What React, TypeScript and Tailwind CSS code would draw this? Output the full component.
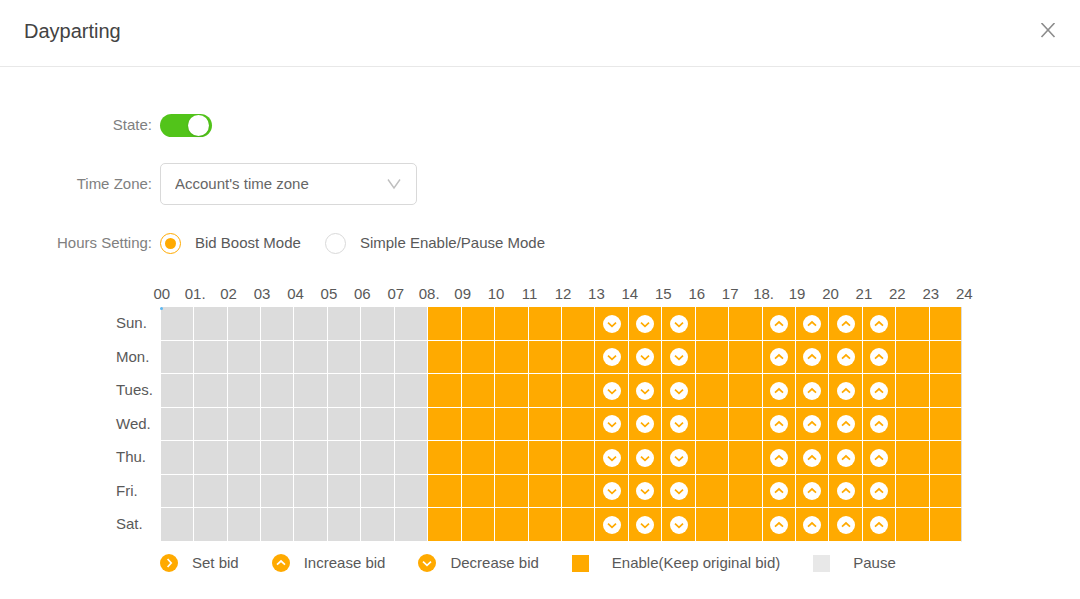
import { useState } from "react";

const days = ["Sun.", "Mon.", "Tues.", "Wed.", "Thu.", "Fri.", "Sat."];
const hourLabels = [
  "00", "01.", "02", "03", "04", "05", "06", "07", "08.", "09", "10", "11", "12",
  "13", "14", "15", "16", "17", "18.", "19", "20", "21", "22", "23", "24",
];
const hours = Array.from({ length: 24 }, (_, i) => i);

type Direction = "up" | "down" | "right";

const chevrons: Record<Direction, string> = {
  up: "M5 10.6 9 7l4 3.6",
  down: "M5 7.7 9 11.3l4-3.6",
  right: "M7.6 5 11.2 9l-3.6 4",
};

const BidIcon = ({ direction, inverted }: { direction: Direction; inverted?: boolean }) => (
  <svg viewBox="0 0 18 18" className="block size-[18px] shrink-0" aria-hidden="true">
    <circle cx="9" cy="9" r="9" fill={inverted ? "#fff" : "#ffaa00"} />
    <path
      d={chevrons[direction]}
      fill="none"
      stroke={inverted ? "#ffaa00" : "#fff"}
      strokeWidth="1.7"
    />
  </svg>
);

const getDirection = (hour: number): Direction | null => {
  if (hour >= 13 && hour <= 15) return "down";
  if (hour >= 18 && hour <= 21) return "up";
  return null;
};

const Radio = ({ id, label, checked, onChange }: any) => (
  <div className="flex items-center gap-[14px]">
    <input
      type="radio"
      name="mode"
      id={id}
      checked={checked}
      onChange={onChange}
      className="grid size-[21px] appearance-none place-items-center rounded-full border border-[#d9d9d9] bg-white before:size-[11px] before:rounded-full checked:border-[#ffaa00] checked:before:bg-[#ffaa00]"
    />
    <label htmlFor={id} className="text-[#595959]">{label}</label>
  </div>
);

const Schedule = () => {
  // every hour spans two half-width columns, so the hour labels can sit on the grid lines
  return (
    <table className="w-full table-fixed border-separate border-spacing-0 text-[#595959]">
      <colgroup>
        <col className="w-[27px]" />
        <col span={50} />
      </colgroup>
      <thead>
        <tr className="h-[26px]">
          <td className="p-0" />
          {hourLabels.map((label) => (
            <th key={label} colSpan={2} scope="col" className="p-0 pl-1 text-center font-normal">
              {label}
            </th>
          ))}
        </tr>
      </thead>
      <tbody>
        {days.map((day) => (
          <tr key={day} className="odd:h-[34px] even:h-[33px]">
            <th colSpan={2} scope="row" className="p-0 pb-[2px] text-left font-normal whitespace-nowrap">
              {day}
            </th>
            {hours.map((hour) => {
              const direction = getDirection(hour);
              return (
                <td
                  key={hour}
                  colSpan={2}
                  className={`relative border-b border-l border-white p-0 last:border-r last:border-r-[#dcdcdc] ${hour < 8 ? "bg-[#dcdcdc]" : "bg-[#ffaa00]"}`}
                >
                  {direction && (
                    <div className="flex justify-center">
                      <BidIcon direction={direction} inverted />
                    </div>
                  )}
                  {day === "Sun." && hour === 0 && (
                    <span className="absolute top-0 -left-px size-[3px] rounded-full bg-[#5cb8f2]" />
                  )}
                </td>
              );
            })}
          </tr>
        ))}
      </tbody>
    </table>
  );
};

const Legend = () => (
  <ul className="flex flex-wrap items-center gap-x-[33px] gap-y-2 text-[#595959]">
    <li className="flex items-center gap-[14px]">
      <BidIcon direction="right" />
      Set bid
    </li>
    <li className="flex items-center gap-[14px]">
      <BidIcon direction="up" />
      Increase bid
    </li>
    <li className="flex items-center gap-[14px]">
      <BidIcon direction="down" />
      Decrease bid
    </li>
    <li className="flex items-center gap-[23px]">
      <span className="size-[17px] bg-[#ffaa00]" />
      Enable(Keep original bid)
    </li>
    <li className="flex items-center gap-[23px]">
      <span className="size-[17px] bg-[#e8e8e8]" />
      Pause
    </li>
  </ul>
);

const App = () => {
  const [enabled, setEnabled] = useState(true);
  const [mode, setMode] = useState("boost");

  return (
    <div className="bg-white font-['Liberation_Sans',Arial,sans-serif] text-[15px] leading-6 text-[#595959]">
      <header className="flex h-[67px] items-center justify-between border-b border-[#e8e8e8] px-6 pb-1">
        <h1 className="text-xl text-[#434343]">Dayparting</h1>
        <button type="button" aria-label="Close" className="text-[#8c8c8c]">
          <svg viewBox="0 0 16 16" className="size-4" fill="none" stroke="currentColor" strokeWidth="1.6">
            <path d="M1.5 0 14.5 14M14.5 0 1.5 14" />
          </svg>
        </button>
      </header>

      <main className="pt-[37px]">
        <div className="grid grid-cols-[152px_1fr] items-center gap-x-2 gap-y-[17px]">
          <span id="state-label" className="text-right text-[#808080]">State:</span>
          <div className="flex h-[42px] items-center">
            <button
              type="button"
              role="switch"
              aria-checked={enabled}
              aria-labelledby="state-label"
              onClick={() => setEnabled(!enabled)}
              className={`flex h-[23px] w-[52px] items-center rounded-full px-[3px] ${enabled ? "justify-end bg-[#52c41a]" : "justify-start bg-[#bfbfbf]"}`}
            >
              <span className="size-[21px] rounded-full bg-white shadow" />
            </button>
          </div>

          <label htmlFor="timezone" className="text-right text-[#808080]">Time Zone:</label>
          <div className="grid w-[257px] items-center">
            <select
              id="timezone"
              className="col-start-1 row-start-1 h-[42px] w-full appearance-none rounded-[5px] border border-[#d9d9d9] bg-white px-[14px] text-[#666666]"
            >
              <option>Account's time zone</option>
            </select>
            <svg
              viewBox="0 0 14 12"
              className="pointer-events-none col-start-1 row-start-1 mr-4 h-3 w-[14px] justify-self-end"
              fill="none"
              stroke="#bfbfbf"
              strokeWidth="1.4"
            >
              <path d="M1 1.5 7 10l6-8.5" />
            </svg>
          </div>

          <span id="hours-label" className="text-right text-[#808080]">Hours Setting:</span>
          <div role="radiogroup" aria-labelledby="hours-label" className="flex h-[42px] items-center gap-6">
            <Radio
              id="boost"
              label="Bid Boost Mode"
              checked={mode === "boost"}
              onChange={() => setMode("boost")}
            />
            <Radio
              id="simple"
              label="Simple Enable/Pause Mode"
              checked={mode === "simple"}
              onChange={() => setMode("simple")}
            />
          </div>
        </div>

        <div className="mt-[17px] pr-[101px] pl-[116px]">
          <Schedule />
        </div>
        <div className="mt-[9px] px-40">
          <Legend />
        </div>
      </main>
    </div>
  );
};

export default App;
